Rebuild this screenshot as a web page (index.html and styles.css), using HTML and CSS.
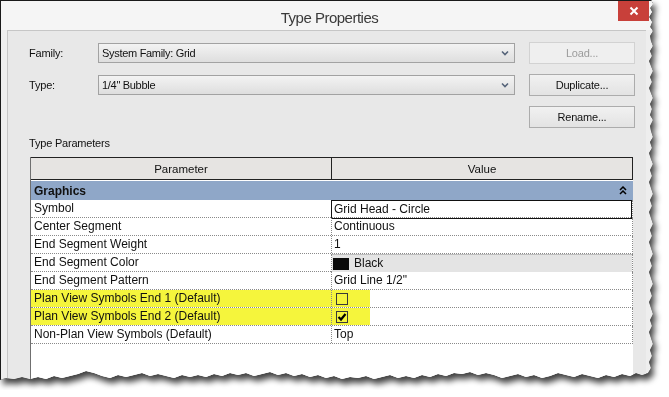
FILE: index.html
```html
<!DOCTYPE html>
<html lang="en">
<head>
    <meta charset="UTF-8">
    <title>Type Properties</title>
    <link rel="stylesheet" href="styles.css">
</head>
<body>

<div class="sheet">
    <div class="dialog">
        <div class="titlebar">
            <span></span>
            <div class="title">Type Properties</div>
            <div class="close">
                <svg width="10" height="10" viewBox="0 0 10 10">
                    <path d="M1.5 1.5 L8.5 8.5 M8.5 1.5 L1.5 8.5" stroke="#fff" stroke-width="2" fill="none"/>
                </svg>
            </div>
        </div>

        <div class="panel">
            <div class="type-form">
                <div class="form-label">Family:</div>
                <div class="combo">
                    <span>System Family: Grid</span>
                    <svg width="8" height="6" viewBox="0 0 8 6"><path d="M1 1.5 L4 4.5 L7 1.5" stroke="#56647a" stroke-width="1.6" fill="none"/></svg>
                </div>
                <div class="btn disabled">Load...</div>

                <div class="form-label">Type:</div>
                <div class="combo">
                    <span>1/4" Bubble</span>
                    <svg width="8" height="6" viewBox="0 0 8 6"><path d="M1 1.5 L4 4.5 L7 1.5" stroke="#56647a" stroke-width="1.6" fill="none"/></svg>
                </div>
                <div class="btn">Duplicate...</div>

                <span></span>
                <span></span>
                <div class="btn">Rename...</div>
            </div>

            <div class="section-label">Type Parameters</div>

            <div class="params">
                <div class="params-head">
                    <div class="head-cell">Parameter</div>
                    <div class="head-cell">Value</div>
                </div>

                <div class="group-row">
                    <span>Graphics</span>
                    <svg width="8" height="9" viewBox="0 0 8 9"><path d="M1 4 L4 1 L7 4 M1 8 L4 5 L7 8" stroke="#000" stroke-width="1.5" fill="none"/></svg>
                </div>

                <div class="param-row">
                    <div class="name">Symbol</div>
                    <div class="value editing">Grid Head - Circle</div>
                </div>
                <div class="param-row">
                    <div class="name">Center Segment</div>
                    <div class="value">Continuous</div>
                </div>
                <div class="param-row">
                    <div class="name">End Segment Weight</div>
                    <div class="value">1</div>
                </div>
                <div class="param-row">
                    <div class="name">End Segment Color</div>
                    <div class="value color-value"><span class="swatch"></span>Black</div>
                </div>
                <div class="param-row">
                    <div class="name">End Segment Pattern</div>
                    <div class="value">Grid Line 1/2"</div>
                </div>
                <div class="param-row marked">
                    <div class="name">Plan View Symbols End 1 (Default)</div>
                    <div class="value"><span class="check"></span></div>
                </div>
                <div class="param-row marked">
                    <div class="name">Plan View Symbols End 2 (Default)</div>
                    <div class="value">
                        <span class="check">
                            <svg width="10" height="10" viewBox="0 0 10 10"><path d="M1.5 5 L4 7.5 L8.5 2" stroke="#000" stroke-width="2.2" fill="none"/></svg>
                        </span>
                    </div>
                </div>
                <div class="param-row">
                    <div class="name">Non-Plan View Symbols (Default)</div>
                    <div class="value">Top</div>
                </div>

                <div class="params-fill"></div>
            </div>
        </div>
    </div>
</div>

</body>
</html>
```

FILE: styles.css
```css
body {
    margin: 0;
    background: #fff;
    font-family: "Liberation Sans", "DejaVu Sans", sans-serif;
    color: #111;
}

/* torn paper edge + shadow */
.sheet {
    width: 660px;
    height: 390px;
    filter: drop-shadow(0 0 0.6px #000) drop-shadow(3px 5px 3px rgba(0, 0, 0, 0.75));
}

.dialog {
    width: 654px;
    height: 386px;
    box-sizing: border-box;
    display: flex;
    flex-direction: column;
    background: #eeeeee;
    border-top: 1px solid #1a1a1a;
    border-left: 1px solid #1a1a1a;
    clip-path: polygon(0 0, 651px 0, 653px 4px, 650px 8px, 652px 12px, 649px 17px, 652px 22px, 650px 27px, 653px 31px, 650px 36px, 651px 41px, 653px 46px, 650px 51px, 652px 56px, 649px 61px, 651px 66px, 653px 71px, 650px 77px, 652px 82px, 649px 88px, 651px 93px, 653px 98px, 650px 104px, 652px 109px, 650px 115px, 653px 120px, 650px 126px, 651px 131px, 653px 137px, 650px 142px, 652px 148px, 649px 153px, 651px 159px, 653px 164px, 650px 170px, 652px 176px, 649px 182px, 651px 188px, 653px 194px, 650px 200px, 652px 206px, 649px 212px, 651px 218px, 653px 224px, 650px 230px, 652px 236px, 649px 242px, 651px 248px, 653px 254px, 650px 260px, 652px 266px, 649px 272px, 651px 278px, 653px 284px, 650px 290px, 652px 296px, 649px 302px, 651px 308px, 653px 314px, 650px 320px, 652px 326px, 649px 332px, 651px 338px, 653px 344px, 650px 350px, 652px 356px, 649px 362px, 651px 368px, 648px 373px, 642px 375px, 636px 373px, 630px 376px, 622px 374px, 614px 377px, 606px 375px, 598px 378px, 590px 376px, 582px 374px, 574px 377px, 566px 375px, 558px 373px, 550px 376px, 542px 378px, 534px 375px, 526px 377px, 518px 374px, 510px 376px, 502px 378px, 494px 375px, 486px 373px, 478px 375px, 470px 372px, 462px 374px, 454px 373px, 446px 376px, 438px 374px, 430px 377px, 422px 375px, 414px 378px, 406px 376px, 398px 378px, 390px 375px, 382px 377px, 374px 379px, 366px 376px, 358px 378px, 350px 377px, 342px 379px, 334px 376px, 326px 378px, 318px 375px, 310px 377px, 302px 374px, 294px 376px, 286px 373px, 278px 375px, 270px 372px, 262px 374px, 254px 376px, 246px 373px, 238px 375px, 230px 373px, 222px 376px, 214px 374px, 206px 377px, 198px 375px, 190px 377px, 182px 375px, 174px 378px, 166px 376px, 158px 374px, 150px 376px, 142px 373px, 134px 375px, 126px 377px, 118px 375px, 110px 378px, 102px 376px, 94px 373px, 86px 371px, 78px 374px, 70px 376px, 62px 378px, 54px 376px, 46px 379px, 38px 377px, 30px 379px, 22px 377px, 14px 379px, 6px 378px, 0 380px);
}

.titlebar {
    height: 29px;
    flex: none;
    display: grid;
    grid-template-columns: 1fr auto 1fr;
    background: #f5f5f5;
}

.title {
    font-size: 15px;
    letter-spacing: -0.5px;
    color: #3a3a3a;
    padding-top: 8px;
    padding-left: 4px;
}

.close {
    justify-self: end;
    width: 31px;
    height: 20px;
    margin-right: 5px;
    background: #c8403a;
    display: flex;
    align-items: center;
    justify-content: center;
}

.panel {
    flex: 1;
    margin: 0 8px 0 6px;
    border-top: 1px solid #c6c6c6;
    border-left: 1px solid #c6c6c6;
    background: #e8e8e8;
    padding: 11px 9px 0 21px;
    display: flex;
    flex-direction: column;
    min-height: 0;
}

.type-form {
    display: grid;
    grid-template-columns: 55px 417px 106px;
    grid-auto-rows: 22px;
    column-gap: 14px;
    row-gap: 10px;
    align-items: center;
    font-size: 11px;
}

.form-label {
    letter-spacing: -0.2px;
}

.combo {
    height: 20px;
    box-sizing: border-box;
    border: 1px solid #a2a2a2;
    background: linear-gradient(#f3f3f3, #dedede);
    display: flex;
    align-items: center;
    justify-content: space-between;
    padding: 0 5px 0 3px;
    letter-spacing: -0.3px;
}

.btn {
    height: 22px;
    box-sizing: border-box;
    border: 1px solid #acacac;
    background: linear-gradient(#f1f1f1, #e3e3e3);
    display: flex;
    align-items: center;
    justify-content: center;
    letter-spacing: -0.2px;
}

.btn.disabled {
    border-color: #d2d2d2;
    background: #efefef;
    color: #9c9c9c;
}

.section-label {
    font-size: 11px;
    letter-spacing: -0.2px;
    margin-top: 8px;
    height: 14px;
    line-height: 14px;
}

.params {
    flex: 1;
    width: 602px;
    margin: 7px 0 0 1px;
    background: #fff;
    border-left: 1px solid #6f6f6f;
    display: flex;
    flex-direction: column;
    font-size: 12px;
}

.params-head {
    display: grid;
    grid-template-columns: 301px 1fr;
    height: 23px;
    flex: none;
}

.head-cell {
    border: 1px solid #222;
    border-left: none;
    background: #e6e4e2;
    display: flex;
    align-items: center;
    justify-content: center;
    font-size: 11.5px;
}

.head-cell + .head-cell {
    border-left: 1px solid #222;
    margin-left: -1px;
}

.group-row {
    height: 19px;
    margin-top: 1px;
    flex: none;
    background: #8fa7c8;
    font-weight: bold;
    display: flex;
    align-items: center;
    justify-content: space-between;
    padding: 0 6px 0 3px;
}

.param-row {
    display: grid;
    grid-template-columns: 301px 1fr;
    height: 18px;
    flex: none;
    box-sizing: border-box;
    border-bottom: 1px dotted #8a8a8a;
    border-right: 1px dotted #8a8a8a;
    line-height: 17px;
}

.name {
    padding-left: 3px;
    border-right: 1px dotted #8a8a8a;
    white-space: nowrap;
}

.value {
    padding-left: 2px;
    display: flex;
    align-items: center;
}

.value.editing {
    border: 1px solid #111;
    margin: 0 0 -1px -1px;
    padding-left: 2px;
}

.color-value {
    background: #e4e4e4;
    border-top: 1px solid #bdbdbd;
    padding-left: 1px;
}

.swatch {
    width: 16px;
    height: 12px;
    background: #0a0a0a;
    margin-right: 5px;
}

.marked .name {
    background: #f5f53c;
}

.marked .value {
    background: linear-gradient(to right, #f5f53c 38px, #fff 38px);
}

.check {
    width: 12px;
    height: 12px;
    box-sizing: border-box;
    border: 1px solid #3a3a3a;
    margin-left: 2px;
    display: flex;
    align-items: center;
    justify-content: center;
}

.params-fill {
    flex: 1;
}
```
